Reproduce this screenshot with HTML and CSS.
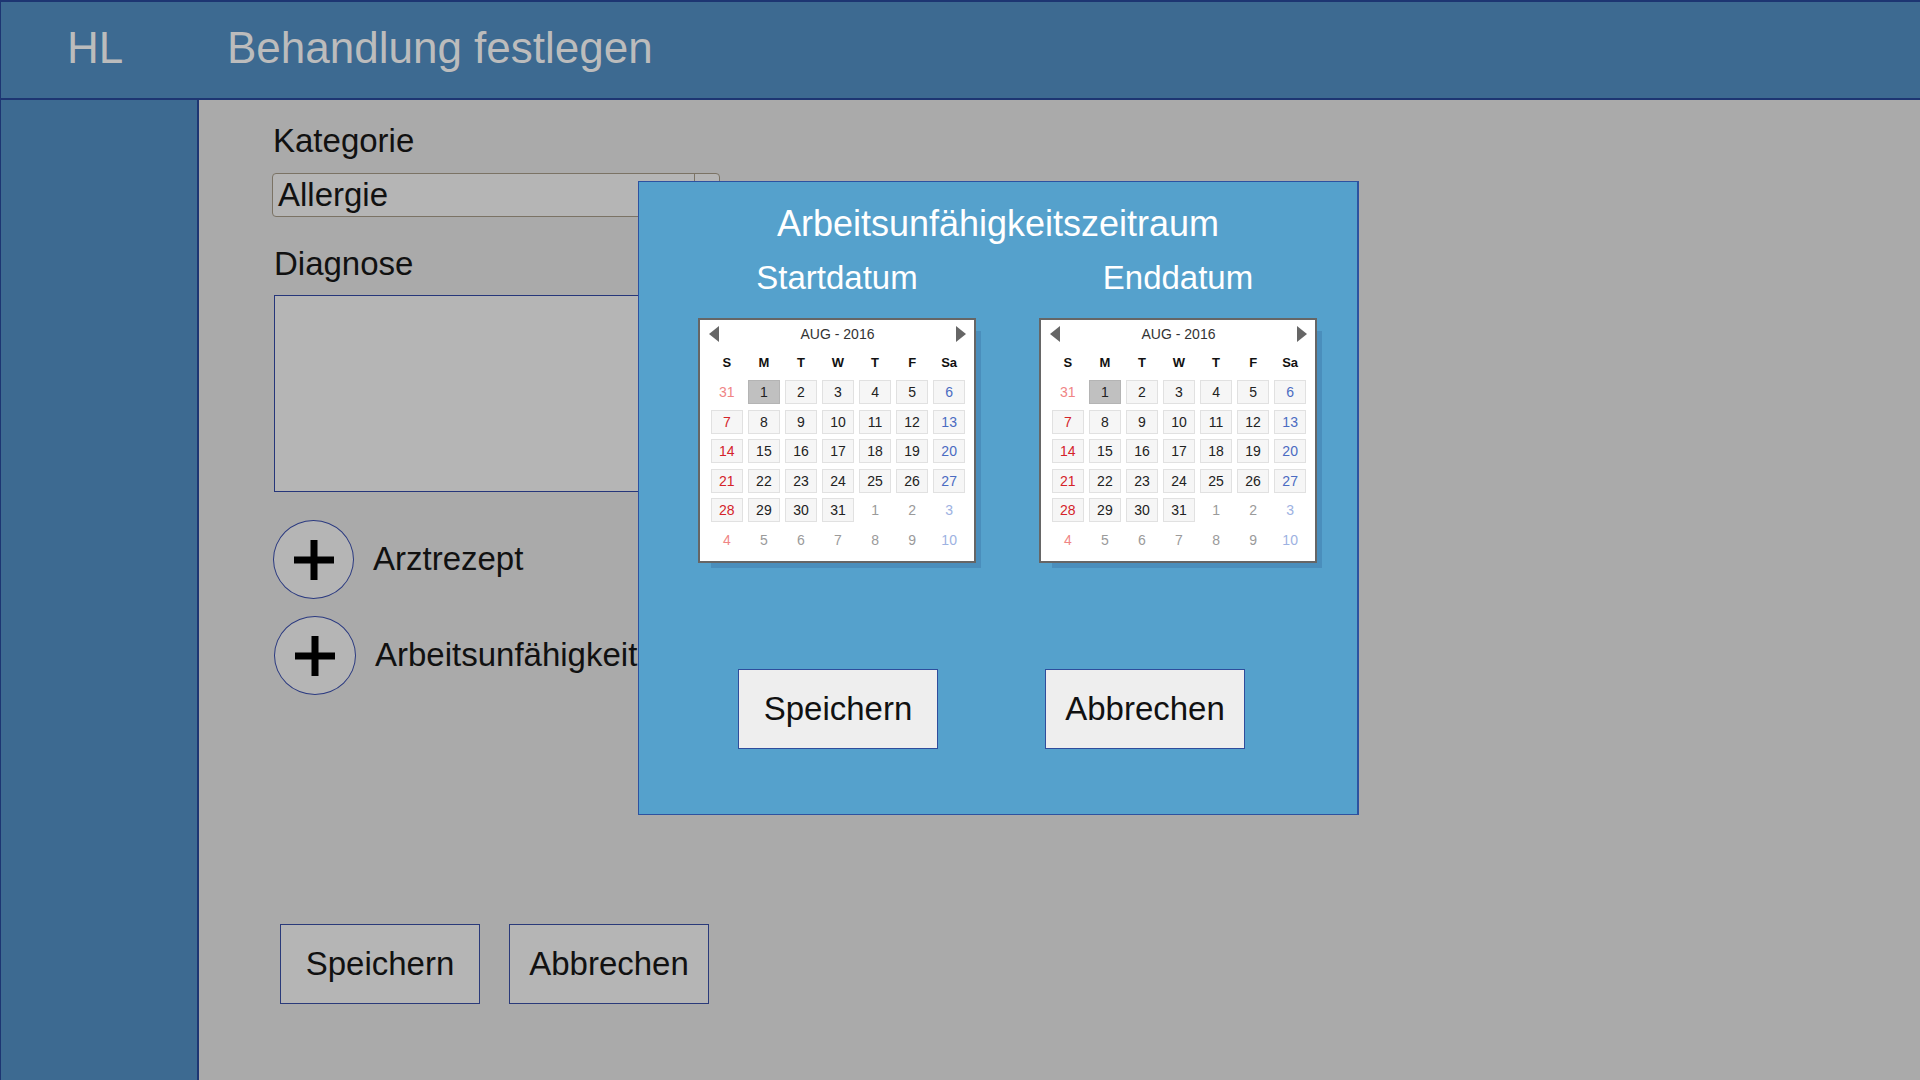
FILE: index.html
```html
<!DOCTYPE html>
<html lang="de">
<head>
<meta charset="utf-8">
<title>Behandlung festlegen</title>
<link rel="stylesheet" href="styles.css">
</head>
<body>
<div class="app">
  <header class="header">
    <div class="logo">HL</div>
    <div class="page-title">Behandlung festlegen</div>
  </header>
  <aside class="sidebar"></aside>
  <main class="main">
    <div class="label label-kat">Kategorie</div>
    <div class="select">
      <span class="select-value">Allergie</span>
      <span class="select-btn"></span>
    </div>
    <div class="label label-diag">Diagnose</div>
    <div class="textarea"></div>
    <div class="add-row row1">
      <div class="circle"><svg width="40" height="40" viewBox="0 0 40 40"><rect x="0" y="16.5" width="40" height="7" fill="#000"/><rect x="16.5" y="0" width="7" height="40" fill="#000"/></svg></div>
      <span class="add-text">Arztrezept</span>
    </div>
    <div class="add-row row2">
      <div class="circle c2"><svg width="40" height="40" viewBox="0 0 40 40"><rect x="0" y="16.5" width="40" height="7" fill="#000"/><rect x="16.5" y="0" width="7" height="40" fill="#000"/></svg></div>
      <span class="add-text">Arbeitsunfähigkeitszeitraum</span>
    </div>
    <div class="actions">
      <div class="btn">Speichern</div>
      <div class="btn">Abbrechen</div>
    </div>
  </main>
</div>

<div class="modal">
  <div class="modal-title">Arbeitsunfähigkeitszeitraum</div>
  <div class="cols">
    <div class="col">
      <div class="col-title">Startdatum</div>
      <div class="cal">
        <div class="cal-head"><span class="arr-l"></span><span class="month">AUG - 2016</span><span class="arr-r"></span></div>
        <div class="dow"><span>S</span><span>M</span><span>T</span><span>W</span><span>T</span><span>F</span><span>Sa</span></div>
        <div class="days">
          <span class="o sun">31</span><span class="d sel">1</span><span class="d">2</span><span class="d">3</span><span class="d">4</span><span class="d">5</span><span class="d sat">6</span>
          <span class="d sun">7</span><span class="d">8</span><span class="d">9</span><span class="d">10</span><span class="d">11</span><span class="d">12</span><span class="d sat">13</span>
          <span class="d sun">14</span><span class="d">15</span><span class="d">16</span><span class="d">17</span><span class="d">18</span><span class="d">19</span><span class="d sat">20</span>
          <span class="d sun">21</span><span class="d">22</span><span class="d">23</span><span class="d">24</span><span class="d">25</span><span class="d">26</span><span class="d sat">27</span>
          <span class="d sun">28</span><span class="d">29</span><span class="d">30</span><span class="d">31</span><span class="o">1</span><span class="o">2</span><span class="o sat">3</span>
          <span class="o sun">4</span><span class="o">5</span><span class="o">6</span><span class="o">7</span><span class="o">8</span><span class="o">9</span><span class="o sat">10</span>
        </div>
      </div>
    </div>
    <div class="col">
      <div class="col-title">Enddatum</div>
      <div class="cal">
        <div class="cal-head"><span class="arr-l"></span><span class="month">AUG - 2016</span><span class="arr-r"></span></div>
        <div class="dow"><span>S</span><span>M</span><span>T</span><span>W</span><span>T</span><span>F</span><span>Sa</span></div>
        <div class="days">
          <span class="o sun">31</span><span class="d sel">1</span><span class="d">2</span><span class="d">3</span><span class="d">4</span><span class="d">5</span><span class="d sat">6</span>
          <span class="d sun">7</span><span class="d">8</span><span class="d">9</span><span class="d">10</span><span class="d">11</span><span class="d">12</span><span class="d sat">13</span>
          <span class="d sun">14</span><span class="d">15</span><span class="d">16</span><span class="d">17</span><span class="d">18</span><span class="d">19</span><span class="d sat">20</span>
          <span class="d sun">21</span><span class="d">22</span><span class="d">23</span><span class="d">24</span><span class="d">25</span><span class="d">26</span><span class="d sat">27</span>
          <span class="d sun">28</span><span class="d">29</span><span class="d">30</span><span class="d">31</span><span class="o">1</span><span class="o">2</span><span class="o sat">3</span>
          <span class="o sun">4</span><span class="o">5</span><span class="o">6</span><span class="o">7</span><span class="o">8</span><span class="o">9</span><span class="o sat">10</span>
        </div>
      </div>
    </div>
  </div>
  <div class="modal-actions">
    <div class="mbtn">Speichern</div>
    <div class="mbtn">Abbrechen</div>
  </div>
</div>
</body>
</html>
```

FILE: styles.css
```css
* { box-sizing: border-box; }
html, body { margin: 0; padding: 0; }
body {
  font-family: "Liberation Sans", Arial, sans-serif;
  background: #aaaaaa;
  width: 1920px;
  height: 1080px;
  overflow: hidden;
  position: relative;
}
.app {
  display: grid;
  grid-template-columns: 199px 1fr;
  grid-template-rows: 100px 980px;
  height: 1080px;
}
.header {
  grid-column: 1 / 3;
  background: #3d6a91;
  border-top: 2px solid #1d3572;
  border-bottom: 2px solid #1d3572;
  border-left: 1px solid #1d3572;
  display: flex;
  align-items: center;
  padding-bottom: 5px;
  color: #bcbcbc;
  font-size: 44px;
}
.logo { width: 226px; padding-left: 66px; }
.sidebar {
  background: #3d6a91;
  border-left: 1px solid #1d3572;
  border-right: 2px solid #1d3572;
}
.main {
  background: #aaaaaa;
  padding-left: 74px;
  display: flex;
  flex-direction: column;
  align-items: flex-start;
  font-size: 33px;
  color: #111;
}
.label { line-height: 38px; }
.label-kat { margin-top: 22px; }
.label-diag { margin-top: 28px; margin-left: 1px; }
.select {
  margin-top: 13px;
  margin-left: -1px;
  width: 448px;
  height: 44px;
  border: 1px solid #7b7365;
  border-radius: 4px;
  background: #b5b5b5;
  display: flex;
}
.select-value { padding-left: 5px; line-height: 42px; }
.select-btn {
  margin-left: auto;
  width: 25px;
  border-left: 1px solid #7b7365;
}
.textarea {
  margin-top: 12px;
  margin-left: 1px;
  width: 446px;
  height: 197px;
  border: 1px solid #26367a;
  background: #b5b5b5;
}
.add-row { display: flex; align-items: center; gap: 19px; }
.row1 { margin-top: 28px; }
.row2 { margin-top: 17px; margin-left: 1px; }
.circle {
  width: 81px;
  height: 79px;
  border-radius: 50%;
  border: 1px solid #2b3a80;
  background: #b5b5b5;
  display: flex;
  align-items: center;
  justify-content: center;
}
.c2 { width: 82px; }
.add-text { line-height: 38px; margin-top: -2px; }
.actions { margin-top: 229px; margin-left: 7px; display: flex; gap: 29px; }
.btn {
  width: 200px;
  height: 80px;
  border: 1px solid #2a3a7a;
  background: #b5b5b5;
  display: flex;
  align-items: center;
  justify-content: center;
}

/* modal */
.modal {
  position: absolute;
  left: 638px;
  top: 181px;
  width: 721px;
  height: 634px;
  background: #55a1cc;
  border: 1px solid #2d52a0;
  border-right-width: 2px;
  color: #fff;
}
.modal-title {
  margin-top: 21px;
  text-align: center;
  font-size: 36px;
  line-height: 42px;
}
.cols {
  margin-top: 14px;
  padding-left: 59px;
  display: grid;
  grid-template-columns: 278px 278px;
  column-gap: 63px;
}
.col-title {
  text-align: center;
  font-size: 33px;
  line-height: 38px;
}
.cal {
  margin-top: 21px;
  width: 278px;
  height: 245px;
  background: #fff;
  border: 2px solid #666;
  box-shadow: 9px 9px 0 -4px #4a8ebc;
  color: #222;
}
.cal-head {
  height: 28px;
  display: flex;
  align-items: center;
  justify-content: space-between;
  padding: 0 8px 0 9px;
}
.month { font-size: 14px; color: #333; }
.arr-l, .arr-r { width: 0; height: 0; border-top: 8px solid transparent; border-bottom: 8px solid transparent; }
.arr-l { border-right: 10px solid #666; }
.arr-r { border-left: 10px solid #666; }
.dow, .days {
  display: grid;
  grid-template-columns: repeat(7, 1fr);
  column-gap: 5.4px;
  padding: 0 9px 0 11px;
}
.dow { height: 26px; margin-top: 2px; font-size: 13px; font-weight: bold; color: #111; }
.dow span { text-align: center; line-height: 26px; }
.days { margin-top: 4px; grid-auto-rows: 24px; row-gap: 5.5px; }
.days span {
  display: flex;
  align-items: center;
  justify-content: center;
  font-size: 14px;
  color: #222;
}
.days .d { border: 1px solid #e1e1e1; background: #f6f6f6; }
.days .sel { background: #c0c0c0; border-color: #b4b4b4; }
.days .sun { color: #d42229; }
.days .sat { color: #4a6bc2; }
.days .o { color: #9a9a9a; }
.days .o.sun { color: #f08585; }
.days .o.sat { color: #9db2e2; }
.modal-actions {
  margin-top: 106px;
  padding-left: 99px;
  display: flex;
  gap: 107px;
}
.mbtn {
  width: 200px;
  height: 80px;
  background: #eeeeee;
  border: 1px solid #2f4d9c;
  color: #111;
  font-size: 33px;
  display: flex;
  align-items: center;
  justify-content: center;
}
```
